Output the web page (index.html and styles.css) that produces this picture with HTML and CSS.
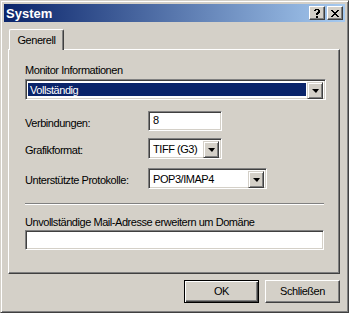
FILE: index.html
```html
<!DOCTYPE html>
<html lang="de">
<head>
  <meta charset="UTF-8" />
  <title>System</title>
  <link rel="stylesheet" href="styles.css">
</head>
<body>
  <div class="window">
    <!-- Titelleiste -->
    <div class="titlebar">
      <span class="title">System</span>
      <div class="caption-buttons">
        <div class="cap-btn">
          <svg width="8" height="9" viewBox="0 0 8 9"><path d="M1 1h1V0h4v1h1v3H6v1H5v1H3V4h1V3h1V1H3v1H1z M3 7h2v2H3z" fill="#000"/></svg>
        </div>
        <div class="cap-btn">
          <svg width="8" height="7" viewBox="0 0 8 7"><path d="M0 0h2v1h1v1h2V1h1V0h2v1H7v1H6v1H5v1h1v1h1v1h1v1H6V6H5V5H3v1H2v1H0V6h1V5h1V4h1V3H2V2H1V1H0z" fill="#000"/></svg>
        </div>
      </div>
    </div>

    <div class="dialog">
      <div class="tabs">
        <div class="tab">Generell</div>
      </div>

      <div class="panel">
        <div class="label">Monitor Informationen</div>
        <div class="combo wide focused">
          <div class="combo-text">Vollständig</div>
          <div class="drop"><span class="arrow"></span></div>
        </div>

        <div class="row first">
          <div class="row-label">Verbindungen:</div>
          <div class="edit short">8</div>
        </div>
        <div class="row second">
          <div class="row-label">Grafikformat:</div>
          <div class="combo short">
            <div class="combo-text">TIFF (G3)</div>
            <div class="drop"><span class="arrow"></span></div>
          </div>
        </div>
        <div class="row third">
          <div class="row-label">Unterstützte Protokolle:</div>
          <div class="combo medium">
            <div class="combo-text">POP3/IMAP4</div>
            <div class="drop"><span class="arrow"></span></div>
          </div>
        </div>

        <div class="separator"></div>

        <div class="label domain-label">Unvollständige Mail-Adresse erweitern um Domäne</div>
        <div class="edit full"></div>
      </div>

      <div class="buttons">
        <div class="button default">OK</div>
        <div class="button">Schließen</div>
      </div>
    </div>
  </div>
</body>
</html>
```

FILE: styles.css
```css
body {
  margin: 0;
  font-family: 'Liberation Sans', Arial, sans-serif;
  font-size: 11px;
  letter-spacing: -0.45px;
  color: #000;
  background: #d4d0c8;
  white-space: nowrap;
}
.window {
  width: 349px;
  height: 313px;
  box-sizing: border-box;
  padding: 3px;
  background: #d4d0c8;
  border-top: 1px solid #d4d0c8;
  border-left: 1px solid #d4d0c8;
  border-right: 1px solid #404040;
  border-bottom: 1px solid #404040;
  box-shadow: inset 1px 1px #fff, inset -1px -1px #808080;
}
.titlebar {
  height: 18px;
  display: flex;
  align-items: center;
  justify-content: space-between;
  background: linear-gradient(to right, #0a246a, #a6caf0);
}
.title {
  color: #fff;
  font-weight: bold;
  font-size: 13px;
  letter-spacing: 0;
  padding-left: 2px;
}
.caption-buttons {
  display: flex;
  gap: 2px;
  padding-right: 2px;
}
.cap-btn {
  width: 16px;
  height: 14px;
  box-sizing: border-box;
  background: #d4d0c8;
  border-top: 1px solid #fff;
  border-left: 1px solid #fff;
  border-right: 1px solid #404040;
  border-bottom: 1px solid #404040;
  box-shadow: inset -1px -1px #808080;
  display: flex;
  align-items: center;
  justify-content: center;
}
.dialog {
  padding: 7px 5px 0 4px;
}
.tabs {
  display: flex;
  padding-left: 1px;
  position: relative;
  z-index: 1;
}
.tab {
  width: 55px;
  height: 21px;
  box-sizing: border-box;
  padding-top: 4px;
  text-align: center;
  background: #d4d0c8;
  border-top: 1px solid #fff;
  border-left: 1px solid #fff;
  border-right: 1px solid #404040;
  border-radius: 2px 2px 0 0;
  box-shadow: inset -1px 0 #808080;
  margin-bottom: -1px;
}
.panel {
  height: 225px;
  box-sizing: border-box;
  padding: 14px 14px 0 16px;
  border-top: 1px solid #fff;
  border-left: 1px solid #fff;
  border-right: 1px solid #404040;
  border-bottom: 1px solid #404040;
  box-shadow: inset -1px -1px #808080;
}
.label {
  height: 13px;
  line-height: 13px;
}
.combo, .edit {
  box-sizing: border-box;
  background: #fff;
  border-top: 1px solid #808080;
  border-left: 1px solid #808080;
  border-right: 1px solid #fff;
  border-bottom: 1px solid #fff;
  box-shadow: inset 1px 1px #404040, inset -1px -1px #d4d0c8;
}
.combo {
  height: 21px;
  display: flex;
  padding: 2px;
}
.combo-text {
  flex: 1;
  line-height: 17px;
  padding-left: 2px;
}
.focused .combo-text {
  background: #0a246a;
  color: #fff;
  margin: 1px 1px 1px 0;
  line-height: 15px;
  padding-left: 2px;
}
.drop {
  width: 16px;
  height: 17px;
  box-sizing: border-box;
  background: #d4d0c8;
  border-top: 1px solid #d4d0c8;
  border-left: 1px solid #d4d0c8;
  border-right: 1px solid #404040;
  border-bottom: 1px solid #404040;
  box-shadow: inset 1px 1px #fff, inset -1px -1px #808080;
  display: flex;
  align-items: center;
  justify-content: center;
}
.arrow {
  width: 0;
  height: 0;
  border-left: 4px solid transparent;
  border-right: 3px solid transparent;
  border-top: 4px solid #000;
  margin-top: 1px;
}
.wide {
  width: 301px;
  margin-top: 2px;
}
.edit {
  height: 20px;
  line-height: 16px;
  padding-left: 4px;
}
.short {
  width: 74px;
}
.medium {
  width: 119px;
}
.full {
  width: 299px;
  margin-top: 1px;
}
.row {
  display: flex;
  align-items: flex-start;
}
.row-label {
  width: 123px;
  padding-top: 6px;
}
.first { margin-top: 11px; }
.second { margin-top: 7px; }
.third { margin-top: 9px; }
.separator {
  width: 299px;
  height: 0;
  margin-top: 14px;
  border-top: 1px solid #808080;
  border-bottom: 1px solid #fff;
}
.domain-label {
  margin-top: 11px;
}
.buttons {
  display: flex;
  justify-content: flex-end;
  gap: 6px;
  margin-top: 6px;
}
.button {
  width: 75px;
  height: 23px;
  box-sizing: border-box;
  border-top: 1px solid #fff;
  border-left: 1px solid #fff;
  border-right: 1px solid #404040;
  border-bottom: 1px solid #404040;
  box-shadow: inset -1px -1px #808080;
  text-align: center;
  line-height: 20px;
}
.default {
  border: 1px solid #000;
  box-shadow: inset 1px 1px #fff, inset -1px -1px #404040, inset -2px -2px #808080;
}
```
